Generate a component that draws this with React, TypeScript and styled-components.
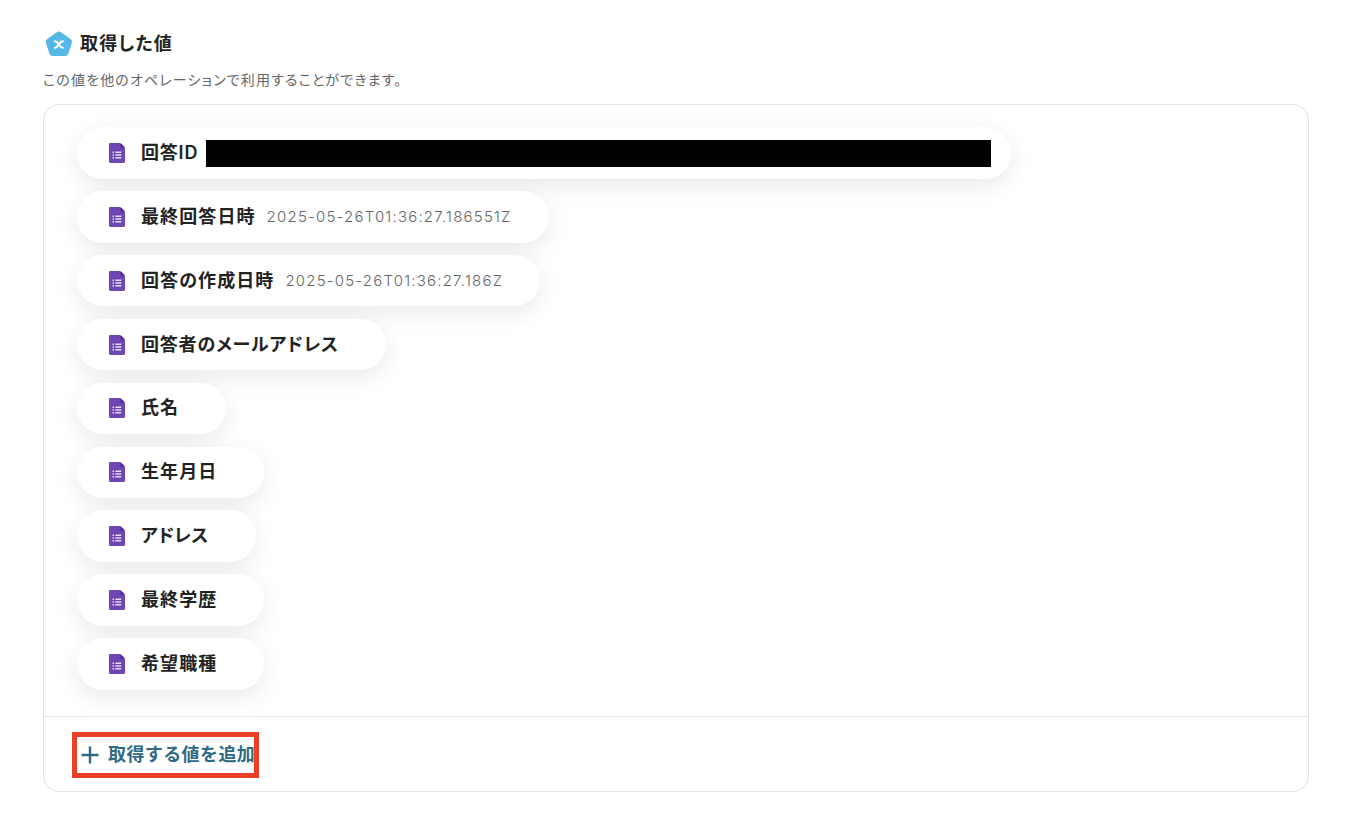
import React from 'react';
import styled, { createGlobalStyle } from 'styled-components';

const FONT = `Inter, 'Noto Sans CJK JP', sans-serif`;

const GlobalStyle = createGlobalStyle`
  html, body {
    margin: 0;
    padding: 0;
    background: #fff;
    font-family: ${FONT};
    font-feature-settings: 'palt';
  }
`;

const Page = styled.div`
  box-sizing: border-box;
  width: 1362px;
  height: 822px;
  padding: 30px 53px 0 43px;
`;

const TitleRow = styled.div`
  display: flex;
  align-items: center;
  gap: 7px;
  height: 28px;
  padding-left: 2px;
`;

const Title = styled.h2`
  margin: 0;
  font-size: 18px;
  line-height: 28px;
  font-weight: 600;
  letter-spacing: 1.2px;
  color: #222;
`;

const Lead = styled.p`
  margin: 12px 0 0;
  font-size: 14px;
  line-height: 20px;
  letter-spacing: 1.15px;
  color: #666;
`;

const Card = styled.section`
  box-sizing: border-box;
  height: 688px;
  margin-top: 14px;
  border: 1px solid #e4e4e4;
  border-radius: 16px;
  display: flex;
  flex-direction: column;
`;

const List = styled.div`
  flex: 1;
  display: flex;
  flex-direction: column;
  align-items: flex-start;
  gap: 12.4px;
  padding: 22.15px 33px 0;
`;

const Pill = styled.div<{ $right: number }>`
  box-sizing: border-box;
  height: 51.5px;
  display: flex;
  align-items: center;
  padding: 0 ${(p) => p.$right}px 0 30.5px;
  border-radius: 26px;
  background: #fff;
  box-shadow: 0 7px 24px rgba(0, 0, 0, 0.09);
`;

const Label = styled.span<{ $tracking: number }>`
  margin-left: 15.5px;
  font-size: 18px;
  line-height: 26px;
  font-weight: 600;
  letter-spacing: ${(p) => p.$tracking}px;
  color: #222;
  white-space: nowrap;
`;

const Value = styled.span`
  margin-left: 11px;
  font-size: 15px;
  font-weight: 300;
  letter-spacing: 1.2px;
  color: #666;
  white-space: nowrap;
`;

const Redacted = styled.span`
  width: 785px;
  height: 27px;
  margin: 1px 0 0 8px;
  background: #000;
`;

const Footer = styled.div`
  box-sizing: border-box;
  height: 75px;
  flex: none;
  border-top: 1px solid #e4e4e4;
  padding: 15px 0 0 28px;
`;

const AddButton = styled.button`
  box-sizing: border-box;
  width: 187px;
  height: 46px;
  display: flex;
  align-items: center;
  gap: 9px;
  padding: 0 0 4px 4px;
  border: 5px solid #ea4026;
  background: #fff;
  font-family: ${FONT};
  font-size: 18px;
  font-weight: 600;
  letter-spacing: 0.4px;
  color: #2e6a85;
  white-space: nowrap;
`;

const PlusGlyph = styled.svg`
  flex: none;
  margin-top: 3px;
`;

function FormsIcon () {
  return (
    <svg width='18' height='22' viewBox='0 0 18 22'>
      <path d='M2 1h10l5 5v13.500a1.500 1.500 0 0 1-1.500 1.500h-13A1.500 1.500 0 0 1 1 19.500V2a1 1 0 0 1 1-1z' fill='#6f46b5' />
      <path d='M12.500 1l4.500 4.500h-4.500z' fill='#4a2a8a' />
      <path d='M4.500 9.500h1.500v1.500H4.500zM4.500 12.300h1.500v1.500H4.500zM4.500 15.100h1.500v1.500H4.500zM7.300 9.500h6v1.500h-6zM7.300 12.300h6v1.500h-6zM7.300 15.100h6v1.500h-6z' fill='#e3dbf4' />
    </svg>
  );
}

function ValueIcon () {
  return (
    <svg width='28' height='26' viewBox='0 0 28 26'>
      <path d='M11.800 1.200a3.500 3.500 0 0 1 4.200 0l9.500 6.800a3.500 3.500 0 0 1 1.300 3.900l-3.500 10.800a3.500 3.500 0 0 1-3.300 2.300H7.800a3.500 3.500 0 0 1-3.300-2.300L1 11.900a3.500 3.500 0 0 1 1.300-3.900z' fill='#55b8e6' />
      <path d='M10 10.200c2 0 2.500 1.200 3.800 3.300s1.800 3.300 4 3.300M17.800 10.200c-1.800 0-2.800 1.600-4 3.300s-2 3.300-3.800 3.300' fill='none' stroke='#fff' strokeWidth='2.100' strokeLinecap='round' />
    </svg>
  );
}

function PlusIcon () {
  return (
    <PlusGlyph width='18' height='18' viewBox='0 0 18 18'>
      <path d='M9 .500v17M.5 9h17' stroke='#2e6a85' strokeWidth='2.400' fill='none' />
    </PlusGlyph>
  );
}

const ITEMS: { label: string; value?: string; tracking: number }[] = [
  { label: '最終回答日時', value: '2025-05-26T01:36:27.186551Z', tracking: 1.1 },
  { label: '回答の作成日時', value: '2025-05-26T01:36:27.186Z', tracking: 1.1 },
  { label: '回答者のメールアドレス', tracking: 0.8 },
  { label: '氏名', tracking: 1.1 },
  { label: '生年月日', tracking: 1.1 },
  { label: 'アドレス', tracking: 0.3 },
  { label: '最終学歴', tracking: 1.1 },
  { label: '希望職種', tracking: 1.1 }
];

export default function App () {
  return (
    <Page>
      <GlobalStyle />
      <TitleRow>
        <ValueIcon />
        <Title>取得した値</Title>
      </TitleRow>
      <Lead>この値を他のオペレーションで利用することができます。</Lead>
      <Card>
        <List>
          <Pill $right={20}>
            <FormsIcon />
            <Label $tracking={0.8}>回答ID</Label>
            <Redacted />
          </Pill>
          {ITEMS.map((item) => (
            <Pill $right={item.value ? 37 : 47} key={item.label}>
              <FormsIcon />
              <Label $tracking={item.tracking}>{item.label}</Label>
              {item.value && <Value>{item.value}</Value>}
            </Pill>
          ))}
        </List>
        <Footer>
          <AddButton>
            <PlusIcon />
            取得する値を追加
          </AddButton>
        </Footer>
      </Card>
    </Page>
  );
}
